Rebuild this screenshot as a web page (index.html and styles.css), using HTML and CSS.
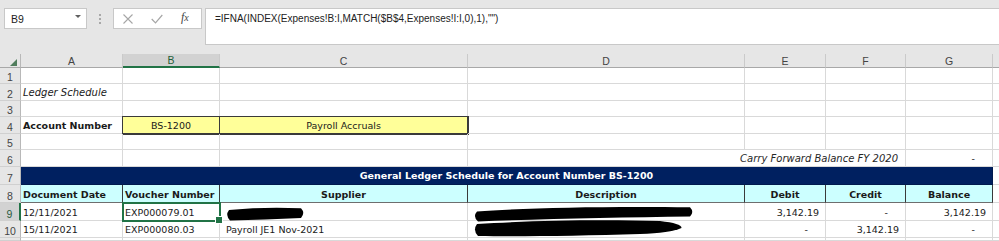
FILE: index.html
```html
<!DOCTYPE html>
<html>
<head>
<meta charset="utf-8">
<link rel="stylesheet" href="styles.css">
</head>
<body>
<div class="app">
  <div class="toolbar">
    <div class="namebox"><span>B9</span><span class="caret"></span></div>
    <div class="grip"><i></i><i></i><i></i></div>
    <div class="fnbox">
      <svg class="ico-x" width="10" height="10" viewBox="0 0 10 10"><path d="M0.5 0.5L9.5 9.5M9.5 0.5L0.5 9.5" stroke="#a6a6a6" stroke-width="1.1" fill="none"/></svg>
      <svg class="ico-ok" width="12" height="10" viewBox="0 0 12 10"><path d="M0.7 5L4.5 8.8L11.3 1" stroke="#a6a6a6" stroke-width="1.2" fill="none"/></svg>
      <span class="fx">f<span class="fx-x">x</span></span>
    </div>
    <div class="formula">=IFNA(INDEX(Expenses!B:I,MATCH($B$4,Expenses!I:I,0),1),"")</div>
  </div>

  <div class="sheet">
    <!-- column headers -->
    <div class="corner"><span class="tri"></span></div>
    <div class="ch">A</div>
    <div class="ch sel-col">B</div>
    <div class="ch">C</div>
    <div class="ch">D</div>
    <div class="ch">E</div>
    <div class="ch">F</div>
    <div class="ch">G</div>
    <div class="ch last"></div>

    <!-- row 1 -->
    <div class="rh">1</div>
    <div class="c"></div><div class="c"></div><div class="c"></div><div class="c"></div><div class="c"></div><div class="c"></div><div class="c"></div><div class="c last"></div>

    <!-- row 2 -->
    <div class="rh">2</div>
    <div class="c it">Ledger Schedule</div><div class="c"></div><div class="c"></div><div class="c"></div><div class="c"></div><div class="c"></div><div class="c"></div><div class="c last"></div>

    <!-- row 3 -->
    <div class="rh">3</div>
    <div class="c"></div><div class="c"></div><div class="c"></div><div class="c"></div><div class="c"></div><div class="c"></div><div class="c"></div><div class="c last"></div>

    <!-- row 4 -->
    <div class="rh">4</div>
    <div class="c b">Account Number</div>
    <div class="c bx ctr">BS-1200</div>
    <div class="c bx ctr">Payroll Accruals</div>
    <div class="c"></div><div class="c"></div><div class="c"></div><div class="c"></div><div class="c last"></div>

    <!-- row 5 -->
    <div class="rh">5</div>
    <div class="c"></div><div class="c"></div><div class="c"></div><div class="c"></div><div class="c"></div><div class="c"></div><div class="c"></div><div class="c last"></div>

    <!-- row 6 -->
    <div class="rh">6</div>
    <div class="c"></div><div class="c"></div><div class="c"></div>
    <div class="c it span3 cf">Carry Forward Balance FY 2020</div>
    <div class="c dash">-</div>
    <div class="c last"></div>

    <!-- row 7 -->
    <div class="rh">7</div>
    <div class="c title span7">General Ledger Schedule for Account Number BS-1200</div>
    <div class="c last"></div>

    <!-- row 8 -->
    <div class="rh">8</div>
    <div class="c th">Document Date</div>
    <div class="c th">Voucher Number</div>
    <div class="c th ctr">Supplier</div>
    <div class="c th ctr">Description</div>
    <div class="c th ctr">Debit</div>
    <div class="c th ctr">Credit</div>
    <div class="c th ctr">Balance</div>
    <div class="c last"></div>

    <!-- row 9 -->
    <div class="rh sel-row">9</div>
    <div class="c">12/11/2021</div>
    <div class="c sel">EXP000079.01</div>
    <div class="c"></div>
    <div class="c"></div>
    <div class="c num">3,142.19</div>
    <div class="c dash">-</div>
    <div class="c num">3,142.19</div>
    <div class="c last"></div>

    <!-- row 10 -->
    <div class="rh">10</div>
    <div class="c">15/11/2021</div>
    <div class="c">EXP000080.03</div>
    <div class="c ind">Payroll JE1 Nov-2021</div>
    <div class="c"></div>
    <div class="c dash">-</div>
    <div class="c num">3,142.19</div>
    <div class="c dash">-</div>
    <div class="c last"></div>

    <!-- row 11 (partial) -->
    <div class="rh"></div>
    <div class="c"></div><div class="c"></div><div class="c"></div><div class="c"></div><div class="c"></div><div class="c"></div><div class="c"></div><div class="c last"></div>
  </div>

  <svg class="redact" width="999" height="241" viewBox="0 0 999 241">
    <path d="M229,210 Q265,206.5 301,208.3 Q305.5,213 301,218 Q265,219.5 230,220.5 Q225,215 229,210 Z" fill="#000"/>
    <path d="M477,211.5 C520,208 600,206.3 690,207.3 Q694.5,212 690,216.5 C620,217.5 540,219 478,221.5 Q472.5,216.5 477,211.5 Z" fill="#000"/>
    <path d="M477,224 C530,220.5 600,219.5 660,221 Q682,223.5 681.5,228 Q670,233 640,234 C580,236 520,236.5 478,236 Q472.5,230 477,224 Z" fill="#000"/>
  </svg>
</div>
</body>
</html>
```

FILE: styles.css
```css
* { box-sizing: border-box; }
html, body { margin: 0; padding: 0; }
body {
  width: 999px;
  height: 241px;
  overflow: hidden;
  background: #e6e6e6;
  font-family: "DejaVu Sans", sans-serif;
}
.app {
  position: relative;
  width: 999px;
  height: 241px;
  overflow: hidden;
}

/* ---------- toolbar / formula bar ---------- */
.toolbar {
  display: flex;
  align-items: flex-start;
  height: 54px;
  padding: 8px 0 0 4px;
  background: #e6e6e6;
}
.namebox {
  width: 83px;
  height: 21px;
  background: #fff;
  border: 1px solid #c8c8c8;
  display: flex;
  align-items: center;
  justify-content: space-between;
  padding: 0 5px 0 6px;
  font: 10.5px "Liberation Sans", sans-serif;
  color: #222;
}
.caret {
  width: 0;
  height: 0;
  border-left: 3px solid transparent;
  border-right: 3px solid transparent;
  border-top: 3px solid #606060;
  margin-top: -4px;
}
.grip {
  width: 26px;
  height: 21px;
  display: flex;
  flex-direction: column;
  align-items: center;
  justify-content: center;
  gap: 2px;
}
.grip i {
  display: block;
  width: 2px;
  height: 2px;
  background: #a8a8a8;
}
.fnbox {
  width: 89px;
  height: 21px;
  background: #fff;
  border: 1px solid #c8c8c8;
  display: flex;
  align-items: center;
}
.ico-x { margin-left: 9px; }
.ico-ok { margin-left: 18px; margin-top: 1px; }
.fx {
  margin-left: 18px;
  font: italic 12px "Liberation Serif", serif;
  color: #444;
  margin-top: -2px;
}
.fx-x { font-size: 10px; }
.formula {
  flex: 1;
  margin-left: 3px;
  height: 37px;
  background: #fff;
  border: 1px solid #c8c8c8;
  border-right: none;
  padding: 4px 0 0 9px;
  font: 10px "Liberation Sans", sans-serif;
  color: #222;
  white-space: nowrap;
}

/* ---------- sheet grid ---------- */
.sheet {
  display: grid;
  grid-template-columns: 21px 102px 97px 248px 277px 81px 80px 87px 6px;
  grid-template-rows: 14px 16px 17px 16px 17px 16px 17px 18px 18px 18px 17px 3px;
  background: #fff;
  font-size: 9.5px;
  color: #1a1a1a;
}
.corner {
  background: #e6e6e6;
  border-right: 1px solid #b8b8b8;
  border-bottom: 1px solid #a8a8a8;
  display: flex;
  align-items: flex-end;
  justify-content: flex-end;
  padding: 0 3px 1px 0;
}
.tri {
  width: 0;
  height: 0;
  border-left: 7px solid transparent;
  border-bottom: 7px solid #4f7d5c;
}
.ch {
  background: #e6e6e6;
  border-right: 1px solid #cacaca;
  border-bottom: 1px solid #a8a8a8;
  display: flex;
  align-items: center;
  justify-content: center;
  font: 10.5px/12px "Liberation Sans", sans-serif;
  color: #444;
}
.ch.sel-col {
  background: #d2d2d2;
  border-bottom: 2px solid #217346;
  color: #1f5f39;
}
.ch.last { border-right: none; }
.rh {
  background: #e6e6e6;
  border-right: 1px solid #b8b8b8;
  border-bottom: 1px solid #d0d0d0;
  display: flex;
  align-items: flex-end;
  justify-content: center;
  font: 10.5px/12px "Liberation Sans", sans-serif;
  color: #444;
  overflow: hidden;
}
.rh.sel-row {
  background: #d2d2d2;
  border-right: 2px solid #217346;
  color: #2a5b3d;
}

.c {
  border-right: 1px solid #d9d9d9;
  border-bottom: 1px solid #d9d9d9;
  display: flex;
  align-items: flex-end;
  padding: 0 2px 1px 2px;
  line-height: 12px;
  white-space: nowrap;
  min-width: 0;
}
.c.last { border-right: none; }
.it { font-style: italic; font-size: 10px; }
.b { font-weight: bold; }
.ctr { justify-content: center; }
.num { justify-content: flex-end; padding-right: 6px; }
.dash { justify-content: flex-end; padding-right: 17px; }
.ind { padding-left: 6px; }
.span3 { grid-column: span 3; }
.span7 { grid-column: span 7; }
.cf { justify-content: flex-end; padding-right: 7px; color: #262626; }

.bx {
  background: #ffff99;
  border-right: 1px solid #3a3a3a;
  border-bottom: 1px solid #3a3a3a;
  box-shadow: 0 0 0 1px #3a3a3a;
}
.title {
  background: #002060;
  border-right: 1px solid #001a4d;
  border-bottom: 1px solid #001a4d;
  color: #fff;
  font-weight: bold;
  justify-content: center;
  padding-bottom: 2px;
}
.th {
  background: #ccffff;
  border-right: 1px solid #3a3a3a;
  border-bottom: 1px solid #6e6e6e;
  font-weight: bold;
}

.sel { position: relative; }
.sel::after {
  content: "";
  position: absolute;
  left: -1px;
  top: -1px;
  right: -2px;
  bottom: -2px;
  border: 2px solid #217346;
  z-index: 2;
}
.sel::before {
  content: "";
  position: absolute;
  width: 6px;
  height: 6px;
  right: -4px;
  bottom: -4px;
  background: #217346;
  border: 1px solid #fff;
  z-index: 3;
}

.redact {
  position: absolute;
  left: 0;
  top: 0;
  pointer-events: none;
}
```
